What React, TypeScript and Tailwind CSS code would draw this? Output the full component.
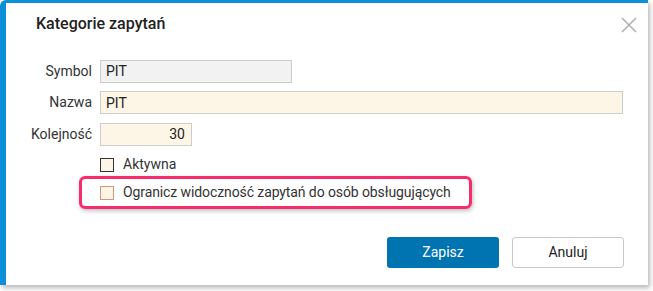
import React from 'react';

const font = { fontFamily: 'Roboto, "Liberation Sans", sans-serif' };

const Field = ({ label, children }: { label: string; children: React.ReactNode }) => (
  <div className="flex items-center">
    <label className="w-[66px] text-right text-[14px] text-[#333]">{label}</label>
    <div className="ml-[8px]">{children}</div>
  </div>
);

export default function App() {
  return (
    <div className="w-[653px] h-[291px] bg-white" style={font}>
      <div className="relative w-[648px] h-[285px] bg-white border-l-[6px] border-t-[3px] border-[#0a8fd8] rounded-tl-[6px] shadow-[2px_3px_5px_rgba(0,0,0,0.28)] flex flex-col">
        <div className="flex items-center justify-between pl-[30px] pr-[11px] pt-[9px]">
          <h2 className="text-[16px] leading-[24px] font-medium text-[#222]">Kategorie zapytań</h2>
          <button className="mt-[2px] w-[16px] h-[16px] flex items-center justify-center">
            <svg width="16" height="16" viewBox="0 0 16 16">
              <path d="M1 1 L15 15 M15 1 L1 15" stroke="#b0b0b0" strokeWidth="1.6" fill="none" />
            </svg>
          </button>
        </div>

        <div className="pl-[20px] mt-[23px] flex flex-col gap-[7.5px]">
          <Field label="Symbol">
            <input
              readOnly
              value="PIT"
              className="w-[192px] h-[23px] px-[5px] text-[14px] text-[#222] bg-[#f2f2f2] border border-[#cdcdcd] outline-none"
            />
          </Field>
          <Field label="Nazwa">
            <input
              readOnly
              value="PIT"
              className="w-[523px] h-[23px] px-[5px] text-[14px] text-[#222] bg-[#fdf5e6] border border-[#cdcdcd] outline-none"
            />
          </Field>
          <Field label="Kolejność">
            <input
              readOnly
              value="30"
              className="w-[92px] h-[23px] px-[6px] text-right text-[14px] text-[#222] bg-[#fdf5e6] border border-[#cdcdcd] outline-none"
            />
          </Field>
        </div>

        <div className="mt-[8px] pl-[94px] flex items-center gap-[9px]">
          <span className="w-[14px] h-[14px] border border-[#333] bg-[#fdf5e6]" />
          <span className="text-[14px] text-[#333]">Aktywna</span>
        </div>

        <div className="mt-[1px] ml-[73px] w-[393px] h-[33px] border-[3px] border-[#f72d6b] rounded-[6px] shadow-[1px_2px_4px_rgba(0,0,0,0.25)] flex items-center pl-[18px] gap-[9px]">
          <span className="w-[14px] h-[14px] border border-[#d49878] bg-[#fdf5e6]" />
          <span className="text-[14px] tracking-[-0.1px] text-[#333]">Ogranicz widoczność zapytań do osób obsługujących</span>
        </div>

        <div className="mt-auto mb-[17px] mr-[24px] flex justify-end gap-[13px]">
          <button className="w-[112px] h-[31px] rounded-[3px] bg-[#0073b1] text-white text-[14px]">Zapisz</button>
          <button className="w-[112px] h-[31px] rounded-[3px] bg-white border border-[#c8c8c8] text-[#222] text-[14px]">Anuluj</button>
        </div>
      </div>
    </div>
  );
}
